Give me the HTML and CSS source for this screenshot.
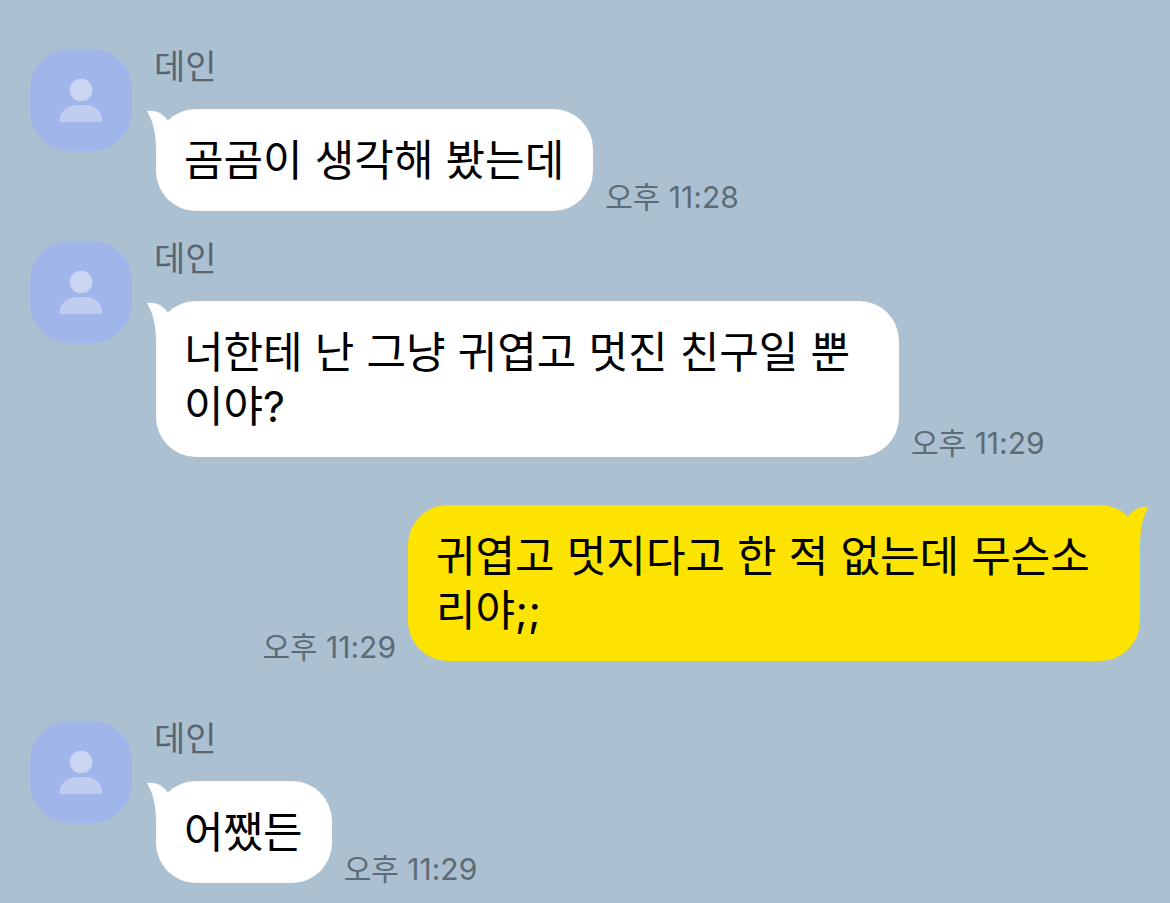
FILE: index.html
```
<!DOCTYPE html>
<html lang="ko">
<head>
    <meta charset="UTF-8">
    <meta name="viewport" content="width=device-width, initial-scale=1.0">
    <title>데인</title>
    <link rel="stylesheet" href="styles.css">
</head>
<body>
    <svg width="0" height="0" class="symbols" aria-hidden="true">
        <symbol id="person" viewBox="0 0 102 102">
            <circle class="head" cx="51" cy="41" r="11.3"/>
            <path class="shoulders" d="M29.5 73C29.5 63 36.5 56 46 56H56C65.500 56 72.500 63 72.500 73Z"/>
        </symbol>
    </svg>

    <main class="chat">
        <div class="message received">
            <svg class="avatar" aria-hidden="true"><use href="#person"/></svg>
            <div class="content">
                <div class="name">데인</div>
                <div class="line">
                    <div class="bubble">
                        <svg class="tail" viewBox="0 0 30 40" aria-hidden="true"><path d="M0 0C9 -1 17 3 21 10L30 20L9 40C9 22 6 10 0 0Z"/></svg>
                        곰곰이 생각해 봤는데
                    </div>
                    <time class="time">오후 11:28</time>
                </div>
            </div>
        </div>

        <div class="message received">
            <svg class="avatar" aria-hidden="true"><use href="#person"/></svg>
            <div class="content">
                <div class="name">데인</div>
                <div class="line">
                    <div class="bubble">
                        <svg class="tail" viewBox="0 0 30 40" aria-hidden="true"><path d="M0 0C9 -1 17 3 21 10L30 20L9 40C9 22 6 10 0 0Z"/></svg>
                        너한테 난 그냥 귀엽고 멋진 친구일 뿐이야?
                    </div>
                    <time class="time">오후 11:29</time>
                </div>
            </div>
        </div>

        <div class="message sent">
            <div class="line">
                <time class="time">오후 11:29</time>
                <div class="bubble">
                    <svg class="tail" viewBox="0 0 30 40" aria-hidden="true"><path d="M30 0C21 -1 13 3 9 10L0 20L21 40C21 20 24 8 30 0Z"/></svg>
                    귀엽고 멋지다고 한 적 없는데 무슨소리야;;
                </div>
            </div>
        </div>

        <div class="message received">
            <svg class="avatar" aria-hidden="true"><use href="#person"/></svg>
            <div class="content">
                <div class="name">데인</div>
                <div class="line">
                    <div class="bubble">
                        <svg class="tail" viewBox="0 0 30 40" aria-hidden="true"><path d="M0 0C9 -1 17 3 21 10L30 20L9 40C9 22 6 10 0 0Z"/></svg>
                        어쨌든
                    </div>
                    <time class="time">오후 11:29</time>
                </div>
            </div>
        </div>
    </main>
</body>
</html>
```
FILE: styles.css
```
body {
    margin: 0;
    background-color: #abc0d1;
    font-family: Inter, "Noto Sans CJK KR", sans-serif;
    font-weight: 390;
}

.symbols {
    position: absolute;
}

.chat {
    padding: 49px 30px 20px;
}

.message {
    display: flex;
}

.message + .message {
    margin-top: 30px;
}

.message + .sent {
    margin-top: 48px;
}

.sent + .message {
    margin-top: 60px;
}

.sent {
    justify-content: flex-end;
}

.avatar {
    flex: none;
    width: 102px;
    height: 102px;
    margin-right: 22px;
    border-radius: 40px;
    background-color: #a0b5e9;
}

.head {
    fill: #cad5f2;
}

.shoulders {
    fill: #c0cdf0;
}

.name {
    height: 36px;
    margin-bottom: 24px;
    font-size: 34px;
    line-height: 36px;
    color: #56656f;
}

.line {
    display: flex;
    align-items: flex-end;
    gap: 12px;
}

.received .line {
    padding-left: 2px;
}

.bubble {
    position: relative;
    box-sizing: border-box;
    max-width: 743px;
    padding: 24px 29px 24px 28px;
    border-radius: 40px;
    background-color: #fff;
    color: #000;
    font-size: 43px;
    line-height: 54px;
}

.sent .bubble {
    max-width: 732px;
    background-color: #fde300;
}

.tail {
    position: absolute;
    top: 2px;
    left: -9px;
    width: 30px;
    height: 40px;
    overflow: visible;
    fill: #fff;
}

.sent .tail {
    left: auto;
    right: -9px;
    fill: #fde300;
}

.time {
    flex: none;
    font-size: 30px;
    line-height: 28px;
    color: #5c6b76;
}
```
